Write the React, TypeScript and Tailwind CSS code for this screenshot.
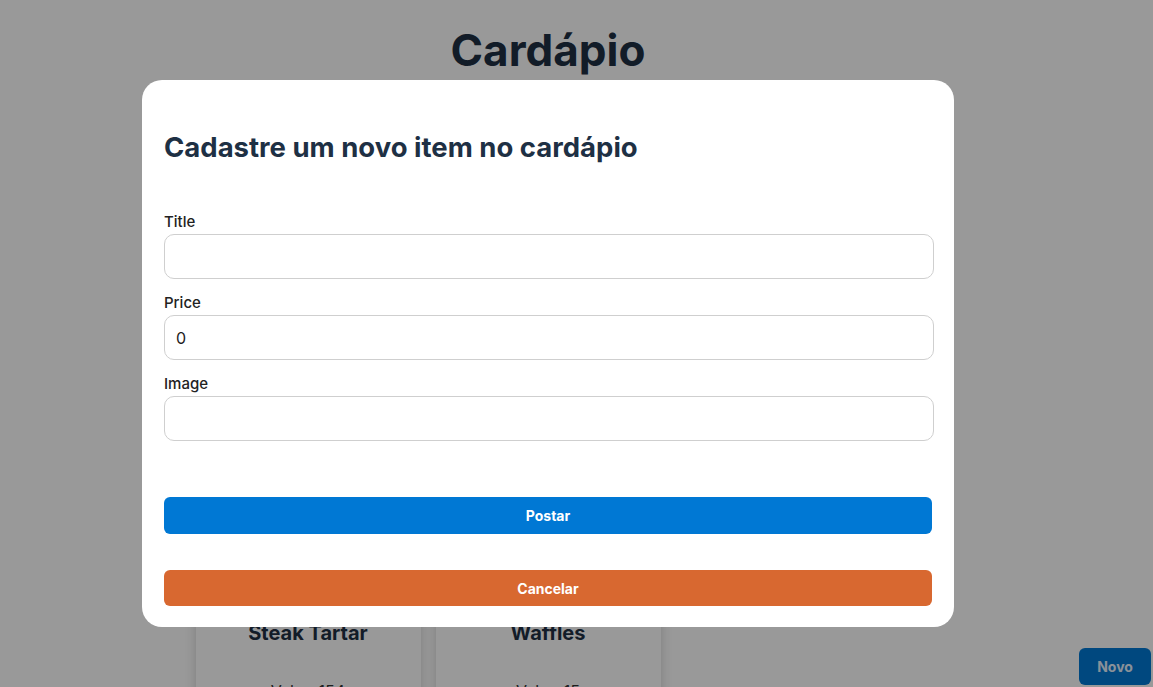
import React, { useState } from 'react';

type MenuItem = {
  title: string;
  price: number;
};

const items: MenuItem[] = [
  { title: 'Pizza Margherita', price: 45 },
  { title: 'Hambúrguer', price: 32 },
  { title: 'Lasanha', price: 38 },
  { title: 'Steak Tartar', price: 154 },
  { title: 'Waffles', price: 15 },
];

const Card: React.FC<{ item: MenuItem }> = ({ item }) => (
  <div className="bg-white rounded-lg shadow-[0_0_12px_rgba(0,0,0,0.18)] p-5 flex flex-col items-center">
    <div className="w-full h-[160px] rounded-md bg-gray-200" />
    <h2 className="mt-4 text-[20px] leading-7 font-bold text-[#1e3044]">{item.title}</h2>
    <p className="mt-8 text-base leading-6 text-[#333]">Valor: {item.price}</p>
  </div>
);

const Field: React.FC<{ label: string; value: string; onChange: (v: string) => void }> = ({
  label,
  value,
  onChange,
}) => (
  <label className="flex flex-col">
    <span className="text-[15px] leading-5 font-medium text-[#222]">{label}</span>
    <input
      value={value}
      onChange={(e) => onChange(e.target.value)}
      className="mt-[2px] h-[45px] w-full rounded-[10px] border border-[#cfcfcf] px-[11px] text-base text-[#222] outline-none"
    />
  </label>
);

export default function App() {
  const [title, setTitle] = useState('');
  const [price, setPrice] = useState('0');
  const [image, setImage] = useState('');

  return (
    <div className="relative min-h-[687px] bg-white font-['Inter',sans-serif] overflow-hidden">
      <div className="w-[1096px] flex flex-col items-center">
        <h1 className="mt-[26px] text-[44px] leading-[48px] font-bold text-[#1e3044]">Cardápio</h1>
        <div className="mt-[34px] grid grid-cols-[repeat(3,225px)] gap-[15px]">
          {items.map((item) => (
            <Card key={item.title} item={item} />
          ))}
        </div>
      </div>

      <button className="fixed right-[2px] bottom-[2px] w-[72px] h-[37px] rounded-md bg-[#0078d4] text-[14px] font-bold text-[#e4f2ff]">
        Novo
      </button>

      {/* Modal overlay */}
      <div className="fixed inset-0 bg-black/40">
        <div className="w-[1096px] flex justify-center pt-[80px]">
          <div className="w-[812px] bg-white rounded-[20px] pt-[51px] pb-[21px] pl-[22px] pr-[20px]">
            <h2 className="text-[27.5px] leading-8 font-bold text-[#1e3044]">
              Cadastre um novo item no cardápio
            </h2>
            <form className="mt-[49px] flex flex-col" onSubmit={(e) => e.preventDefault()}>
              <div className="flex flex-col gap-[14px]">
                <Field label="Title" value={title} onChange={setTitle} />
                <Field label="Price" value={price} onChange={setPrice} />
                <Field label="Image" value={image} onChange={setImage} />
              </div>
              <button
                type="submit"
                className="mt-[56px] w-[768px] h-[37px] rounded-md bg-[#0078d4] text-[14px] font-bold text-white"
              >
                Postar
              </button>
              <button
                type="button"
                className="mt-[36px] w-[768px] h-[36px] rounded-md bg-[#d86830] text-[14px] font-bold text-white"
              >
                Cancelar
              </button>
            </form>
          </div>
        </div>
      </div>
    </div>
  );
}
